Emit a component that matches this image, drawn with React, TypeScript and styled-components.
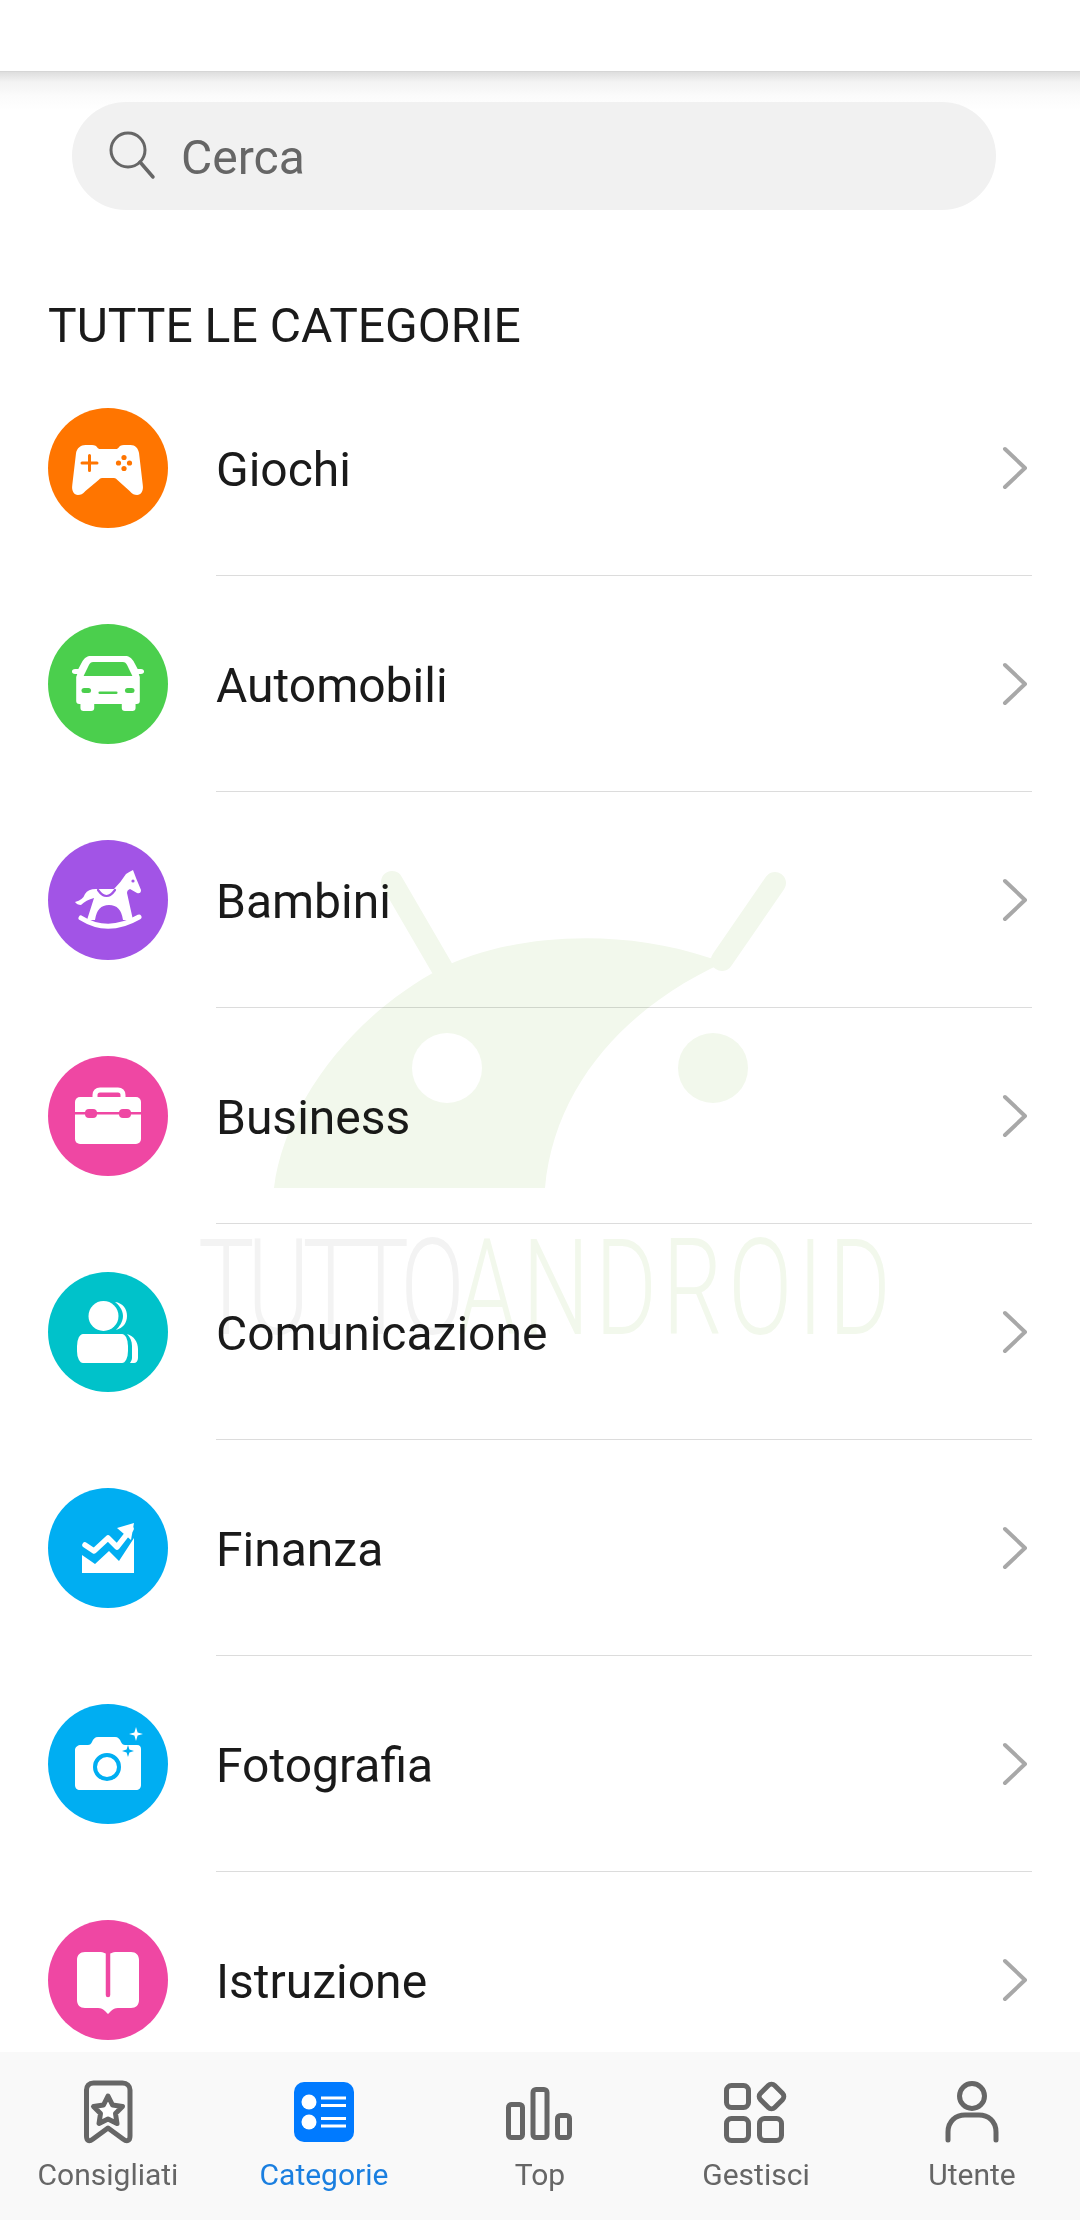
import type { ReactNode } from "react";
import styled, { createGlobalStyle } from "styled-components";

const GlobalStyle = createGlobalStyle`
  html, body {
    margin: 0;
    padding: 0;
    background: #ffffff;
  }
  * {
    box-sizing: border-box;
  }
`;

const GamesIcon = ({ bg }: { bg: string }) => (
  <svg width="120" height="120" viewBox="0 0 120 120">
    <path
      fill="#fff"
      transform="translate(60 62) scale(0.94 1) translate(-60 -62)"
      d="M36 37h7c3 0 5 1 6 3 1 1 2 1 4 1h14c2 0 3 0 4-1 1-2 3-3 6-3h7c5 0 8 3 9 8l4 32c1 6-2 10-6 10-3 0-5-1-8-4L70 72c-2-2-3-2-5-2H55c-2 0-3 0-5 2L36 83c-3 3-5 4-8 4-4 0-7-4-6-10l4-32c1-5 5-8 10-8z"
    />
    <path stroke={bg} strokeWidth="3" strokeLinecap="round" d="M34 55h15M41.500 47.500v15" />
    <circle cx="76" cy="49.500" r="2.600" fill={bg} />
    <circle cx="76" cy="60.500" r="2.600" fill={bg} />
    <circle cx="70.500" cy="55" r="2.600" fill={bg} />
    <circle cx="81.500" cy="55" r="2.600" fill={bg} />
  </svg>
);

const CarIcon = ({ bg }: { bg: string }) => (
  <svg width="120" height="120" viewBox="0 0 120 120">
    <g transform="translate(60 0) scale(1.06 1) translate(-60 0)">
      <path
        fill="#fff"
        d="M44 32h32c4 0 6 2 8 5l4 8h3c2 0 3 1 3 2.500s-1 2.500-3 2.500h-2l1 3v24c0 2-1 3-3 3h-1v4c0 2-1 3-3 3h-7c-2 0-3-1-3-3v-4H47v4c0 2-1 3-3 3h-7c-2 0-3-1-3-3v-4h-1c-2 0-3-1-3-3V53l1-3h-2c-2 0-3-1-3-2.500s1-2.500 3-2.500h3l4-8c2-3 4-5 8-5z"
      />
      <path fill={bg} d="M46 38h28c2 0 3 1 4 3l5 11H37l5-11c1-2 2-3 4-3z" />
      <rect x="35" y="64" width="9" height="5" rx="2.500" fill={bg} />
      <rect x="76" y="64" width="9" height="5" rx="2.500" fill={bg} />
      <rect x="51" y="67.500" width="18" height="2.500" rx="1.200" fill={bg} />
    </g>
  </svg>
);

const KidsIcon = ({ bg }: { bg: string }) => (
  <svg width="120" height="120" viewBox="0 0 120 120">
    <path
      fill="#fff"
      d="M85 30L88 38L93 50Q93 54 89 53L82 49Q79 50 79 53L85 80H75Q73 65 61 65Q49 65 47 80H39L46 58Q38 60 33 65Q29 65 27 62Q35 60 37 54Q40 49 48 49H66Q73 42 78 34Q81 32 85 30Z"
    />
    <path stroke={bg} strokeWidth="2.200" fill="none" strokeLinecap="round" d="M50 50Q58.500 62 67 50" />
    <circle cx="85" cy="41" r="1.600" fill={bg} />
    <path stroke="#fff" strokeWidth="5" fill="none" strokeLinecap="round" d="M33 78Q60 95 91 77" />
  </svg>
);

const BusinessIcon = ({ bg }: { bg: string }) => (
  <svg width="120" height="120" viewBox="0 0 120 120">
    <path
      fill="none"
      stroke="#fff"
      strokeWidth="5"
      d="M47 42v-3c0-3 2-5 5-5h18c3 0 5 2 5 5v3"
    />
    <rect x="27" y="41" width="66" height="47" rx="5" fill="#fff" />
    <rect x="27" y="56" width="66" height="2.500" fill={bg} />
    <rect x="37" y="53" width="12" height="9" rx="4" fill={bg} />
    <rect x="71" y="53" width="12" height="9" rx="4" fill={bg} />
  </svg>
);

const ChatIcon = () => (
  <svg width="120" height="120" viewBox="0 0 120 120">
    <ellipse cx="55.500" cy="44" rx="15" ry="15" fill="#fff" />
    <rect x="29" y="62" width="51" height="29" rx="6" ry="12" fill="#fff" />
    <path fill="#fff" d="M67 30c8 1 12 7 12 14s-4 12-11 14c3-3 7-8 7-14s-4-11-8-14z" />
    <path fill="#fff" d="M79 62c7 2 11 8 11 15v9c0 3-2 5-4 5h-4c1-2 2-3 2-5V74c0-5-2-9-5-12z" />
  </svg>
);

const FinanceIcon = () => (
  <svg width="120" height="120" viewBox="0 0 120 120">
    <path fill="#fff" d="M34 67l13 9 14-13 10 10 15-23v35H34z" />
    <path
      fill="none"
      stroke="#fff"
      strokeWidth="5.500"
      strokeLinecap="round"
      strokeLinejoin="round"
      d="M37 57l9 6 14-13 9 9 14-18"
    />
    <path fill="#fff" d="M69 40l17-5-3 17z" />
  </svg>
);

const PhotoIcon = ({ bg }: { bg: string }) => (
  <svg width="120" height="120" viewBox="0 0 120 120">
    <path
      fill="#fff"
      d="M33 41h7c2 0 3-1 4-3 1-3 3-5 6-5h17c3 0 5 2 6 5 1 2 2 3 4 3h12c3 0 4 2 4 4v36c0 3-2 5-5 5H32c-3 0-5-2-5-5V46c0-3 3-5 6-5z"
    />
    <circle cx="59" cy="63" r="12" fill="none" stroke={bg} strokeWidth="4" />
    <path fill={bg} d="M80 41l1.400 4.600L86 47l-4.600 1.400L80 53l-1.400-4.600L74 47l4.600-1.400z" />
    <path fill="#fff" d="M88 23l1.600 5.400L95 30l-5.400 1.600L88 37l-1.600-5.400L81 30l5.400-1.600z" />
  </svg>
);

const StudyIcon = ({ bg }: { bg: string }) => (
  <svg width="120" height="120" viewBox="0 0 120 120">
    <path
      fill="#fff"
      d="M37 32h14c5 0 8 2 9 4 1-2 4-4 9-4h14c5 0 8 3 8 8v40c0 5-3 8-8 8H70c-3 0-5 1-7 3l-3 3-3-3c-2-2-4-3-7-3H37c-5 0-8-3-8-8V40c0-5 3-8 8-8z"
    />
    <path stroke={bg} strokeWidth="4.500" strokeLinecap="round" d="M60 34v41" />
  </svg>
);

const categories: { name: string; color: string; icon: (bg: string) => ReactNode }[] = [
  { name: "Giochi", color: "#ff7500", icon: (bg) => <GamesIcon bg={bg} /> },
  { name: "Automobili", color: "#4bcf4d", icon: (bg) => <CarIcon bg={bg} /> },
  { name: "Bambini", color: "#a254e6", icon: (bg) => <KidsIcon bg={bg} /> },
  { name: "Business", color: "#ef47a3", icon: (bg) => <BusinessIcon bg={bg} /> },
  { name: "Comunicazione", color: "#00c2ca", icon: () => <ChatIcon /> },
  { name: "Finanza", color: "#00aef2", icon: () => <FinanceIcon /> },
  { name: "Fotografia", color: "#00aef2", icon: (bg) => <PhotoIcon bg={bg} /> },
  { name: "Istruzione", color: "#ef47a3", icon: (bg) => <StudyIcon bg={bg} /> },
];

const App = () => {
  return (
    <Page>
      <GlobalStyle />
      <TopBar />
      <Main>
        <SearchBar>
          <svg width="50" height="50" viewBox="0 0 50 50">
            <circle cx="20" cy="19" r="17" fill="none" stroke="#666" strokeWidth="3" />
            <path d="M32 31l13 15" stroke="#666" strokeWidth="3.500" strokeLinecap="round" />
          </svg>
          <SearchText>Cerca</SearchText>
        </SearchBar>
        <Heading>TUTTE LE CATEGORIE</Heading>
        {categories.map((cat) => (
          <Row key={cat.name}>
            <IconCircle $color={cat.color}>{cat.icon(cat.color)}</IconCircle>
            <RowBody>
              <RowLabel>{cat.name}</RowLabel>
              <svg width="28" height="46" viewBox="0 0 28 46">
                <path
                  d="M4 4l20 19L4 42"
                  fill="none"
                  stroke="#a8a8a8"
                  strokeWidth="4"
                  strokeLinecap="round"
                  strokeLinejoin="round"
                />
              </svg>
            </RowBody>
          </Row>
        ))}
      </Main>
      <Watermark>
        <svg width="620" height="330" viewBox="0 0 620 330">
          <path
            fill="#f2f8ec"
            d="M4 322C14 240 80 150 172 102C230 72 340 58 440 92L467 91C370 130 285 210 275 322Z"
          />
          <path d="M122 16L172 102" stroke="#f2f8ec" strokeWidth="22" strokeLinecap="round" />
          <path d="M505 17L452 94" stroke="#f2f8ec" strokeWidth="22" strokeLinecap="round" />
          <circle cx="177" cy="202" r="35" fill="#ffffff" />
          <circle cx="443" cy="202" r="35" fill="#f2f8ec" />
        </svg>
        <WatermarkText>
          TUTTO<WatermarkAccent>ANDROID</WatermarkAccent>
        </WatermarkText>
      </Watermark>
      <BottomNav>
        <Tab>
          <svg width="64" height="68" viewBox="0 0 64 68">
            <path
              d="M10.500 58V12c0-4 2.500-7 7-7h29c4.500 0 7.500 3 7.500 7v46c0 5-3 6-7 3L32 50 17 61c-4 3-6.500 2-6.500-3z"
              fill="none"
              stroke="#666"
              strokeWidth="5"
              strokeLinejoin="round"
            />
            <path
              d="M32 18l4.500 9 10 1.500-7 7 1.500 10-9-4.500-9 4.500 1.500-10-7-7 10-1.500z"
              fill="#fff"
              stroke="#666"
              strokeWidth="5"
              strokeLinejoin="round"
            />
          </svg>
          <TabLabel>Consigliati</TabLabel>
        </Tab>
        <Tab>
          <svg width="64" height="68" viewBox="0 0 64 68">
            <rect x="2" y="4" width="60" height="60" rx="10" fill="#007aff" />
            <circle cx="17" cy="24" r="7.500" fill="#fff" />
            <circle cx="17" cy="44" r="7.500" fill="#fff" />
            <path
              d="M29 20h25M29 27.500h25M29 40.500h25M29 48h25"
              stroke="#fff"
              strokeWidth="2.800"
            />
          </svg>
          <TabLabel $active>Categorie</TabLabel>
        </Tab>
        <Tab>
          <svg width="68" height="68" viewBox="0 0 68 68">
            <g fill="none" stroke="#666" strokeWidth="5">
              <rect x="2.500" y="26.500" width="14" height="33" rx="3" />
              <rect x="27" y="11.500" width="14" height="48" rx="3" />
              <rect x="51.500" y="37.500" width="12" height="22" rx="3" />
            </g>
          </svg>
          <TabLabel>Top</TabLabel>
        </Tab>
        <Tab>
          <svg width="68" height="68" viewBox="0 0 68 68">
            <g fill="none" stroke="#666" strokeWidth="5">
              <rect x="4.500" y="7.500" width="22" height="22" rx="5" />
              <rect x="4.500" y="40.500" width="22" height="22" rx="5" />
              <rect x="37.500" y="40.500" width="22" height="22" rx="5" />
              <rect x="39.500" y="8.500" width="20" height="20" rx="4.500" transform="rotate(45 49.500 18.500)" />
            </g>
          </svg>
          <TabLabel>Gestisci</TabLabel>
        </Tab>
        <Tab>
          <svg width="68" height="68" viewBox="0 0 68 68">
            <circle cx="34" cy="18" r="12.500" fill="none" stroke="#666" strokeWidth="5" />
            <path
              d="M10 62V54c0-11 8-17 17-17h14c9 0 17 6 17 17v8"
              fill="none"
              stroke="#666"
              strokeWidth="5"
              strokeLinecap="round"
            />
          </svg>
          <TabLabel>Utente</TabLabel>
        </Tab>
      </BottomNav>
    </Page>
  );
};

export default App;

const Page = styled.div`
  position: relative;
  width: 1080px;
  height: 2220px;
  display: flex;
  flex-direction: column;
  overflow: hidden;
  background: #ffffff;
  font-family: Roboto, "Liberation Sans", sans-serif;
`;

const TopBar = styled.div`
  height: 72px;
  flex-shrink: 0;
  background: #ffffff;
  border-bottom: 1px solid #d6d6d6;
`;

const Main = styled.main`
  flex: 1;
  min-height: 0;
  overflow: hidden;
  padding-top: 30px;
  background: linear-gradient(#dedede, #f3f3f3 10px, #fbfbfb 24px, #ffffff 38px) no-repeat top / 100% 38px;
`;

const SearchBar = styled.div`
  width: 924px;
  height: 108px;
  margin-left: 72px;
  padding-left: 36px;
  display: flex;
  align-items: center;
  gap: 23px;
  border-radius: 54px;
  background: #f1f1f1;
`;

const SearchText = styled.span`
  padding-top: 2px;
  font-size: 48px;
  color: #666666;
`;

const Heading = styled.h2`
  margin: 86px 0 4px 48px;
  font-size: 48px;
  font-weight: 400;
  line-height: 60px;
  color: #1a1a1a;
`;

const Row = styled.div`
  height: 216px;
  padding-left: 48px;
  display: flex;
  align-items: center;
  gap: 48px;
`;

const IconCircle = styled.div<{ $color: string }>`
  width: 120px;
  height: 120px;
  flex-shrink: 0;
  border-radius: 50%;
  background: ${(p) => p.$color};
  display: flex;
`;

const RowBody = styled.div`
  flex: 1;
  height: 100%;
  margin-right: 48px;
  padding-right: 3px;
  display: flex;
  align-items: center;
  justify-content: space-between;
  border-bottom: 1px solid #dcdcdc;
`;

const RowLabel = styled.span`
  padding-top: 4px;
  font-size: 48px;
  color: #1a1a1a;
`;

const Watermark = styled.div`
  position: absolute;
  left: 198px;
  top: 866px;
  width: 700px;
  display: flex;
  flex-direction: column;
  pointer-events: none;
  mix-blend-mode: multiply;

  svg {
    margin-left: 72px;
  }
`;

const WatermarkText = styled.div`
  margin-top: 43px;
  font-size: 134px;
  font-weight: 300;
  line-height: 100px;
  letter-spacing: -10px;
  white-space: nowrap;
  color: #f3f3f3;
  transform: scaleX(0.705);
  transform-origin: left center;
`;

const WatermarkAccent = styled.span`
  letter-spacing: 8px;
  color: #f2f8ec;
`;

const BottomNav = styled.nav`
  height: 168px;
  flex-shrink: 0;
  display: grid;
  grid-template-columns: repeat(5, 216px);
  background: #f9f9f9;
`;

const Tab = styled.div`
  padding-top: 26px;
  display: flex;
  flex-direction: column;
  align-items: center;
`;

const TabLabel = styled.span<{ $active?: boolean }>`
  margin-top: 9px;
  font-size: 30px;
  line-height: 40px;
  color: ${(p) => (p.$active ? "#1a7fe0" : "#666666")};
`;
